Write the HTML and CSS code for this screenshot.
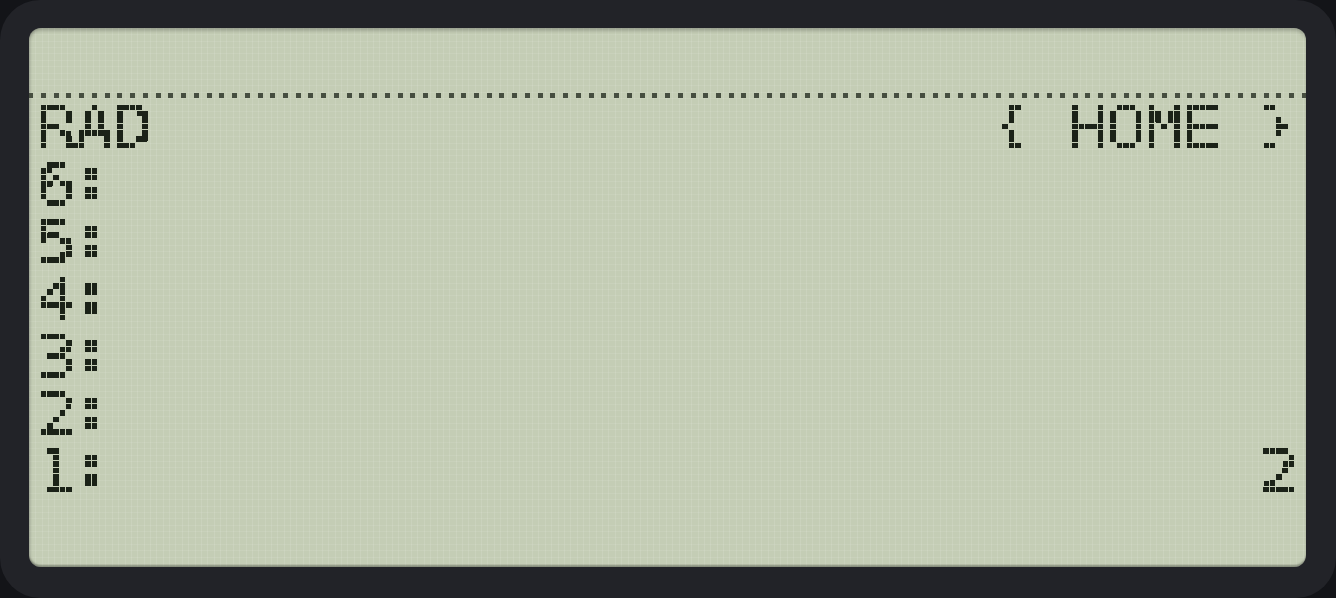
FILE: index.html
```html
<!DOCTYPE html>
<html lang="en">
<head>
<meta charset="utf-8">
<title>HP 48 stack</title>
<link rel="stylesheet" href="styles.css">
</head>
<body>
<div class="bezel">
  <div class="lcd">
    <div class="annunciators"></div>
    <div class="rule"></div>
    <div class="dots">
      <div class="sampler">
        <div class="screen">
          <div class="line"><span>RAD</span><span><span class="brace open">{</span> HOME <span class="brace close">}</span></span></div>
          <div class="line"><span>6<span class="colon">:</span></span></div>
          <div class="line"><span>5<span class="colon">:</span></span></div>
          <div class="line"><span>4<span class="colon">:</span></span></div>
          <div class="line"><span>3<span class="colon">:</span></span></div>
          <div class="line"><span>2<span class="colon">:</span></span></div>
          <div class="line"><span>1<span class="colon">:</span></span><span>2</span></div>
        </div>
      </div>
    </div>
  </div>
</div>
<svg class="defs" width="0" height="0" aria-hidden="true">
  <defs>
    <!-- grow each sampled point into a square LCD pixel -->
    <filter id="lcd-pixels" color-interpolation-filters="sRGB">
      <feMorphology in="SourceAlpha" operator="dilate" radius="2" result="grown"/>
      <feComponentTransfer in="grown" result="solid">
        <feFuncA type="discrete" tableValues="0 1"/>
      </feComponentTransfer>
      <feFlood flood-color="#1b2218"/>
      <feComposite in2="solid" operator="in"/>
    </filter>
  </defs>
</svg>
</body>
</html>
```

FILE: styles.css
```css
/* LCD pixel pitch is 6.368px; a character cell is 6 x 9 pixels */
html, body {
  margin: 0;
  padding: 0;
}

body {
  width: 1336px;
  height: 598px;
  overflow: hidden;
  background: #131418;
}

.bezel {
  box-sizing: border-box;
  width: 1336px;
  height: 598px;
  padding: 28px 30px 31px 29px;
  border-radius: 40px;
  background: #222328;
}

.lcd {
  box-sizing: border-box;
  height: 539px;
  display: flex;
  flex-direction: column;
  border-radius: 12px;
  overflow: hidden;
  background-color: #c4cdb5;
  background-image:
    repeating-linear-gradient(90deg, rgba(255, 255, 255, 0.10) 0 1px, transparent 1px 6.368px),
    repeating-linear-gradient(180deg, rgba(255, 255, 255, 0.08) 0 1px, transparent 1px 6.368px);
  box-shadow:
    inset 0 4px 4px -2px rgba(0, 0, 0, 0.28),
    inset 3px 0 3px -2px rgba(0, 0, 0, 0.2),
    inset 0 -3px 2px -1px rgba(60, 64, 56, 0.45);
}

.annunciators {
  flex: none;
  height: 64.6px;
}

/* dotted separator under the annunciator area */
.rule {
  flex: none;
  height: 5px;
  margin-bottom: 7.736px;
  background: repeating-linear-gradient(90deg,
    #464e40 0 4.26px,
    transparent 4.26px 11.996px,
    #464e40 11.996px 12.736px);
}

.dots {
  flex: none;
  width: 1261px;
  height: 401.2px;
  margin-left: 12px;
  filter: url(#lcd-pixels);
}

/* one sample point per LCD pixel */
.sampler {
  width: 100%;
  height: 100%;
  -webkit-mask-image:
    repeating-linear-gradient(90deg, transparent 0 1.6px, #000 1.6px 3.2px, transparent 3.2px 6.368px),
    repeating-linear-gradient(180deg, transparent 0 1.6px, #000 1.6px 3.2px, transparent 3.2px 6.368px);
  -webkit-mask-composite: source-in;
  mask-image:
    repeating-linear-gradient(90deg, transparent 0 1.6px, #000 1.6px 3.2px, transparent 3.2px 6.368px),
    repeating-linear-gradient(180deg, transparent 0 1.6px, #000 1.6px 3.2px, transparent 3.2px 6.368px);
  mask-composite: intersect;
}

.screen {
  width: 1096.5px;
  margin-left: -5px;
  transform: scaleX(1.15);
  transform-origin: 0 0;
  font-family: "DejaVu Sans Mono", monospace;
  font-size: 58.3px;
  letter-spacing: -1.87px;
  color: #000;
}

.line {
  height: 57.31px;
  line-height: 45.66px;
  display: flex;
  justify-content: space-between;
  white-space: pre;
}

/* the stack-level colon is two 2x2 blocks */
.colon {
  font-size: 45.1px;
  line-height: 0;
  margin-left: 1.14px;
  margin-right: 6.8px;
  vertical-align: 9.1px;
  -webkit-text-stroke: 7px #000;
}

/* braces are squeezed to cap height and three pixels wide */
.brace {
  display: inline-block;
  width: 33.23px;
  font-size: 70px;
  line-height: 0;
  letter-spacing: 0;
  transform-origin: 0 50%;
  -webkit-text-stroke: 2px #000;
}

.brace.open {
  text-indent: -9px;
  transform: translate(8.5px, 1.2px) scale(0.6, 0.69);
}

.brace.close {
  text-indent: -4.6px;
  transform: translate(5.2px, 1.2px) scale(0.6, 0.69);
}

.defs {
  display: block;
  width: 0;
  height: 0;
}
```
